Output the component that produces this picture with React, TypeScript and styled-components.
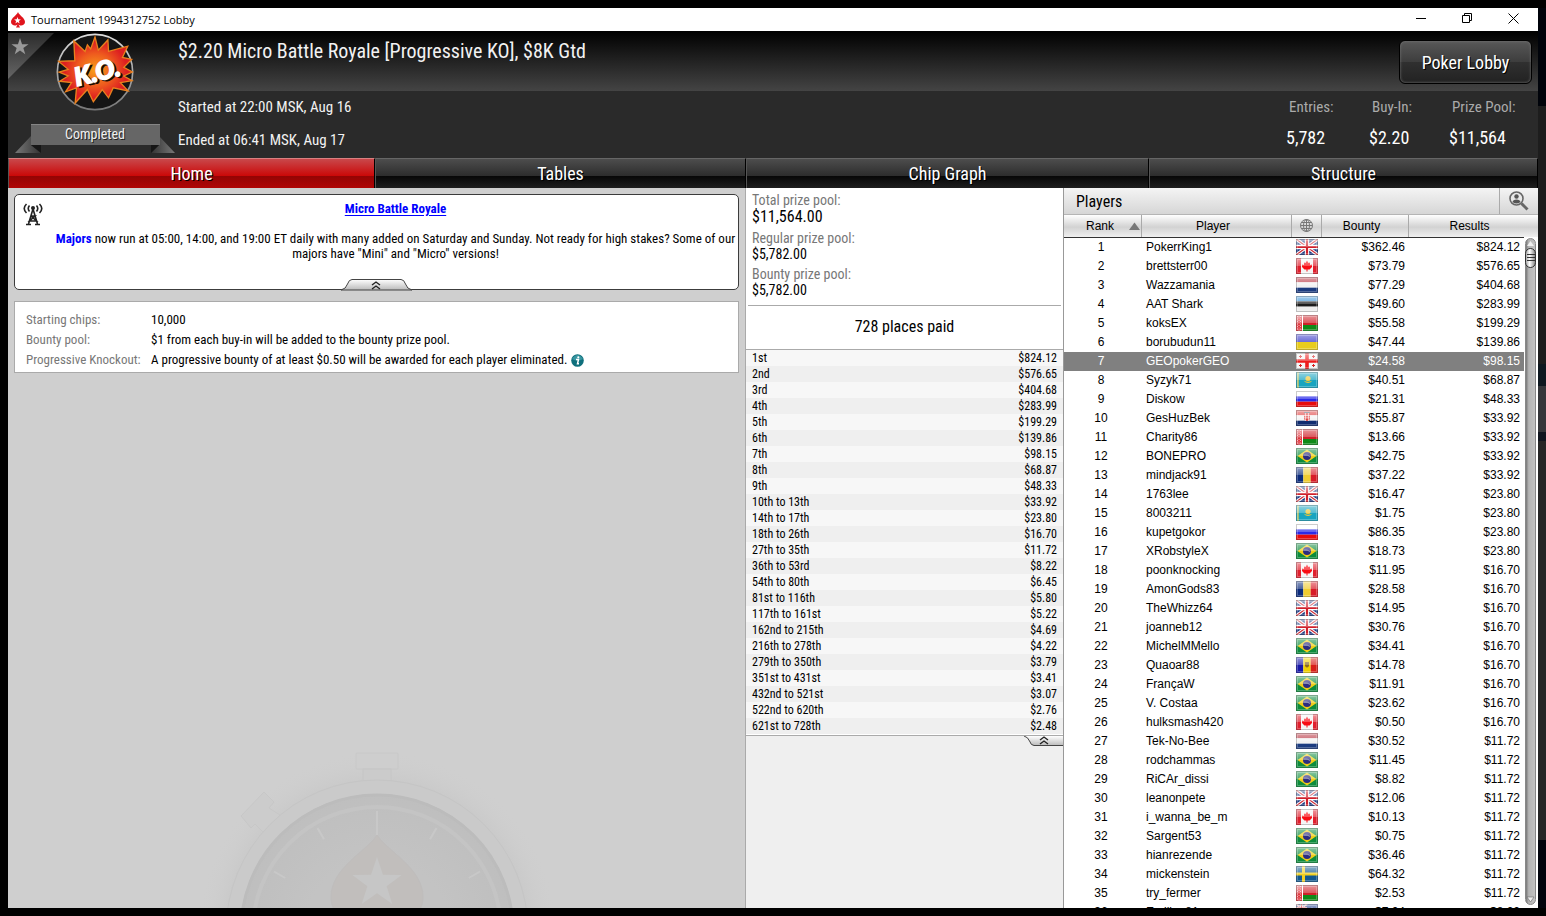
import React from "react";
import styled, { createGlobalStyle, css } from "styled-components";

const narrow = `"Liberation Sans Narrow", "Roboto Condensed", "Liberation Sans", sans-serif`;
const sans = `"Liberation Sans", Arial, sans-serif`;

const GlobalStyle = createGlobalStyle`
  * { box-sizing: border-box; }
  body { margin: 0; background: #000; font-family: ${narrow}; }
  button { font: inherit; margin: 0; padding: 0; border: 0; background: none; color: inherit; cursor: pointer; }
  h1, h2, p, dl, dd, dt { margin: 0; font-weight: normal; }
  table { border-collapse: collapse; width: 100%; }
  td, th { padding: 0; font-weight: normal; }
  svg { display: block; }
`;

const Desktop = styled.div`
  height: 100vh;
  padding: 8px;
  background:
    linear-gradient(#000, #000) bottom / 100% 8px no-repeat,
    linear-gradient(#000 8px, #00030a 8px 106px, #1d1d1d 106px 364px, #0e1820 364px 386px, #35363a 386px 432px, #10151f 432px 441px, #262626 441px 840px, #02040c 840px)
      right / 8px 100% no-repeat,
    #000;
`;

const Window = styled.div`
  display: flex;
  flex-direction: column;
  height: 100%;
  overflow: hidden;
  background: #cfcfcf;
`;

/* ---------- title bar ---------- */

const TitleBar = styled.header`
  display: flex;
  align-items: center;
  flex: none;
  height: 23px;
  padding: 0 2px;
  background: #fff;
  color: #000;
  font: 11px/22px "Open Sans", "Noto Sans", sans-serif;
`;

const TitleText = styled.span`
  flex: 1;
  padding-left: 5px;
`;

const WindowButton = styled.button`
  display: flex;
  align-items: center;
  justify-content: center;
  width: 46px;
  height: 23px;
  padding-bottom: 2px;
`;

/* ---------- tournament header ---------- */

const Hero = styled.section`
  position: relative;
  display: grid;
  grid-template-columns: 170px 1fr auto;
  flex: none;
  height: 127px;
  color: #f2f2f2;
  background: linear-gradient(#000, #444) top / 100% 60px no-repeat, #2a2a2a;
`;

const Favourite = styled.button`
  position: absolute;
  left: 0;
  top: 2px;
`;

const Emblem = styled.div`
  display: flex;
  flex-direction: column;
  align-items: center;
  gap: 13px;
  padding: 2px 0 0 4px;
`;

const Ribbon = styled.div`
  position: relative;
  width: 160px;
  height: 30px;
`;

const RibbonText = styled.span`
  position: absolute;
  inset: 0;
  text-align: center;
  font-size: 14px;
  line-height: 21px;
  color: #f0f0f0;
  text-shadow: 1px 1px 0 #222;
`;

const Facts = styled.div`
  display: flex;
  flex-direction: column;
`;

const EventName = styled.h1`
  height: 60px;
  font-size: 20px;
  line-height: 41px;
`;

const EventTime = styled.p`
  font-size: 15px;
  line-height: 33px;
`;

const Side = styled.div`
  display: flex;
  flex-direction: column;
  align-items: flex-end;
  padding: 9px 6px 0 0;
`;

const LobbyButton = styled.button`
  width: 133px;
  height: 44px;
  border: 1px solid #000;
  border-radius: 6px;
  background: linear-gradient(#585858, #3d3d3d 50%, #303030 50%, #222);
  box-shadow: inset 0 0 3px #777;
  color: #fff;
  font-size: 18px;
  text-shadow: 1px 1px 0 #000;
`;

const Stats = styled.dl`
  display: grid;
  grid-template-columns: 83px 80px 83px;
  padding-top: 7px;
`;

const StatLabel = styled.dt`
  padding-left: 3px;
  font-size: 15px;
  line-height: 32px;
  color: #aaa;
`;

const StatValue = styled.dd`
  font-size: 18px;
  line-height: 30px;
  color: #fff;
`;

/* ---------- tabs ---------- */

const Tabs = styled.nav`
  display: grid;
  grid-template-columns: 367fr 371fr 403fr 389fr;
  flex: none;
  height: 30px;
  background: #000;
`;

const Tab = styled.button<{ $active?: boolean }>`
  border-left: 1px solid #555;
  border-right: 1px solid #000;
  border-top: 1px solid ${(p) => (p.$active ? "#d98080" : "#666")};
  background: ${(p) =>
    p.$active
      ? "linear-gradient(#c9484b, #cb0606 60%, #940404 60%, #b00505)"
      : "linear-gradient(#4d4d4d, #2c2c2c 60%, #080808 60%, #1e1e1e)"};
  color: #fff;
  font-size: 18px;
  line-height: 28px;
  text-shadow: 1px 1px 0 #000;
`;

/* ---------- body ---------- */

const Columns = styled.main`
  display: grid;
  grid-template-columns: 1fr 318px 475px;
  flex: 1;
  min-height: 0;
`;

const HomePane = styled.section`
  position: relative;
  display: flex;
  flex-direction: column;
  gap: 11px;
  padding: 6px;
  overflow: hidden;
  background: #cfcfcf;
`;

const Stopwatch = styled.svg`
  position: absolute;
  left: 50%;
  bottom: 0;
  margin-left: -180px;
`;

const Notice = styled.article`
  position: relative;
  height: 96px;
  padding: 6px 0 0 38px;
  border: 1px solid #3c3c3c;
  border-radius: 5px;
  background: #fff;
  text-align: center;
  font-size: 13px;
  line-height: 15px;
  color: #000;
`;

const Antenna = styled.svg`
  position: absolute;
  left: 8px;
  top: 7px;
`;

const NoticeText = styled.p`
  padding-top: 15px;
`;

const NoticeLink = styled.a<{ $plain?: boolean }>`
  color: #00f;
  font-weight: bold;
  text-decoration: ${(p) => (p.$plain ? "none" : "underline")};
  text-underline-offset: 2px;
`;

const NoticeFold = styled.button`
  position: absolute;
  left: 50%;
  bottom: -2px;
  margin-left: -36px;
`;

const Rules = styled.dl`
  position: relative;
  display: grid;
  grid-template-columns: 125px 1fr;
  padding: 8px 11px 2px;
  border: 1px solid #aaa;
  background: #fff;
  font-size: 13px;
  line-height: 20px;
`;

const RuleLabel = styled.dt`
  color: #777;
`;

const RuleValue = styled.dd`
  display: flex;
  gap: 4px;
  align-items: center;
  color: #000;
`;

const PrizePane = styled.section`
  border-left: 1px solid #aaa;
  background: #efefef;
  overflow: hidden;
`;

const PrizeSheet = styled.div`
  border-bottom: 1px solid #aaa;
  padding-bottom: 1px;
  background: #fff;
`;

const Pools = styled.dl`
  height: 118px;
  margin: 0 2px;
  padding: 3px 4px 0;
  border-bottom: 1px solid #aaa;
`;

const PoolLabel = styled.dt`
  font-size: 14px;
  line-height: 18px;
  color: #777;
`;

const PoolValue = styled.dd<{ $big?: boolean }>`
  padding-bottom: ${(p) => (p.$big ? "4px" : "3px")};
  font-size: ${(p) => (p.$big ? "16px" : "14px")};
  line-height: ${(p) => (p.$big ? "16px" : "15px")};
  color: #000;
`;

const PlacesPaid = styled.h2`
  height: 44px;
  border-bottom: 1px solid #aaa;
  text-align: center;
  font-size: 16px;
  line-height: 42px;
`;

const PrizeTable = styled.table`
  font-size: 12px;
  tr { height: 16px; }
  tr:nth-child(odd) { background: #f7f7f7; }
  tr:nth-child(even) { background: #efefef; }
  th { padding-left: 6px; line-height: 16px; text-align: left; }
  td { padding-right: 6px; line-height: 16px; text-align: right; }
`;

const PrizeFold = styled.button`
  display: block;
  margin-left: auto;
`;

/* ---------- players ---------- */

const PlayersPane = styled.section`
  position: relative;
  overflow: hidden;
  border-left: 1px solid #999;
  background: #fff;
`;

const PlayersBar = styled.header`
  display: flex;
  justify-content: space-between;
  height: 27px;
  border-bottom: 1px solid #b5b5b5;
  background: linear-gradient(#f4f4f4, #d6d6d6);
`;

const PlayersTitle = styled.h2`
  padding-left: 12px;
  font-size: 16px;
  line-height: 27px;
`;

const SearchButton = styled.button`
  display: flex;
  align-items: center;
  justify-content: center;
  width: 39px;
  border-left: 1px solid #aaa;
`;

const PlayersTable = styled.table`
  table-layout: fixed;
  font-family: ${sans};
  font-size: 12px;
  color: #000;
`;

const HeadCell = styled.th<{ $width?: number }>`
  ${(p) => p.$width && css`width: ${p.$width}px;`}
  height: 22px;
  padding-right: 8px;
  border-bottom: 1px solid #333;
  background: linear-gradient(#fff, #d2d2d2 55%, #f0f0f0);
  box-shadow: inset -1px 0 #aaa;
  text-align: center;
  &:last-child { box-shadow: none; }
`;

const RankHead = styled.span`
  display: flex;
  align-items: center;
  justify-content: flex-end;
  gap: 15px;
`;

const SortArrow = styled.svg`
  margin-right: -6px;
`;

const IconHead = styled.span`
  display: flex;
  justify-content: center;
  padding-left: 7px;
`;

const PlayerRow = styled.tr<{ $selected: boolean }>`
  height: 19px;
  ${(p) => p.$selected && css`
    background: #808080;
    color: #fff;
  `}
`;

const Cell = styled.td<{ $align?: "left" | "center" | "right"; $end?: number }>`
  line-height: 19px;
  text-align: ${(p) => p.$align ?? "left"};
  padding-left: 4px;
  padding-right: ${(p) => p.$end ?? 0}px;
  white-space: nowrap;
`;

const ScrollBar = styled.div`
  position: absolute;
  right: 0;
  top: 49px;
  bottom: 0;
  width: 14px;
  padding: 1px 2px 3px 1px;
  background: #fff;
`;

const ScrollTrack = styled.div`
  position: relative;
  display: flex;
  flex-direction: column;
  justify-content: space-between;
  height: 100%;
  border: 1px solid #888;
  border-radius: 6px;
  background: linear-gradient(90deg, #777, #b4b4b4 30%, #c2c2c2);
`;

const ScrollThumb = styled.div`
  position: absolute;
  left: -1px;
  right: -1px;
  top: 9px;
  height: 20px;
  padding: 5px 1px 0;
  border: 1px solid #333;
  border-radius: 6px;
  background: linear-gradient(90deg, #aaa, #fff 40%, #888);
`;

/* ---------- flags ---------- */

const star = (cx: number, cy: number, r: number) =>
  Array.from({ length: 10 }, (_, i) => {
    const a = (Math.PI * i) / 5 - Math.PI / 2;
    const d = i % 2 ? r * 0.39 : r;
    return `${(cx + d * Math.cos(a)).toFixed(2)},${(cy + d * Math.sin(a)).toFixed(2)}`;
  }).join(" ");

const Bands = ({ colors, vertical }: { colors: string[]; vertical?: boolean }) => (
  <>
    {colors.map((c, i) =>
      vertical ? (
        <rect key={i} x={(22 / colors.length) * i} width={22 / colors.length} height="16" fill={c} />
      ) : (
        <rect key={i} y={(16 / colors.length) * i} width="22" height={16 / colors.length} fill={c} />
      )
    )}
  </>
);

const UnionJack = () => (
  <>
    <rect width="22" height="16" fill="#1d3a82" />
    <path d="M0 0L22 16M22 0L0 16" stroke="#fff" strokeWidth="3.4" />
    <path d="M0 0L22 16M22 0L0 16" stroke="#cc2a35" strokeWidth="1.2" />
    <path d="M11 0V16M0 8H22" stroke="#fff" strokeWidth="4.4" />
    <path d="M11 0V16M0 8H22" stroke="#d0202c" strokeWidth="2.2" />
  </>
);

const flagArt: Record<string, React.ReactNode> = {
  gb: <UnionJack />,
  ca: (
    <>
      <rect width="22" height="16" fill="#f4f4f4" />
      <path d="M0 0H5V16H0zM17 0H22V16H17z" fill="#e0202e" />
      <path d="M11 2.5L12.5 5L14 4.500V7L16 6.500V9L13.500 11.500H11.500V13.500H10.500V11.500H8.500L6 9V6.500L8 7V4.500L9.500 5Z" fill="#f80c14" />
    </>
  ),
  nl: <Bands colors={["#b8323f", "#f2f2f2", "#1c3c80"]} />,
  ee: <Bands colors={["#3c94d8", "#1c1c1c", "#ededed"]} />,
  by: (
    <>
      <rect width="22" height="11" fill="#cf2028" />
      <rect y="10" width="22" height="6" fill="#0f8a18" />
      <rect width="6" height="16" fill="#e03840" />
      <path d="M1.500 1V16M4.500 1V16M3 0V16" stroke="#fff" strokeWidth=".6" strokeDasharray="1 1.500" />
      <path d="M6.500 0V16" stroke="#fff" />
    </>
  ),
  ua: <Bands colors={["#3a3ac8", "#e8cc1c"]} />,
  ge: (
    <>
      <rect width="22" height="16" fill="#f4f4f4" />
      <path d="M11 0V16M0 8H22" stroke="#ee1c1c" strokeWidth="3.600" />
      <path d="M4.500 2v3M3 3.500h3M17.500 2v3M16 3.500h3M4.500 11v3M3 12.500h3M17.500 11v3M16 12.500h3" stroke="#d82020" />
    </>
  ),
  kz: (
    <>
      <rect width="22" height="16" fill="#18a4c0" />
      <path d="M2 0V16" stroke="#d8c850" strokeWidth="1.400" />
      <circle cx="12" cy="6.500" r="2.600" fill="#f0c838" />
      <path d="M7.500 8.500Q12 13.500 16.500 8.500Q12 11 7.500 8.500" fill="#f0c838" />
    </>
  ),
  ru: <Bands colors={["#fff", "#2a2ae8", "#e80c0c"]} />,
  hr: (
    <>
      <Bands colors={["#e04040", "#f4f4f4", "#102c70"]} />
      <path d="M8 3h6v6q-3 4-6 0z" fill="#e04848" />
      <path d="M9.500 3v8M12.500 3v8M8 5.500h6M8 8h6" stroke="#fff" strokeWidth=".6" />
      <path d="M8 2.500h6" stroke="#567" />
    </>
  ),
  br: (
    <>
      <rect width="22" height="16" fill="#0c8c3c" />
      <path d="M11 1.500L20.500 8 11 14.500 1.500 8z" fill="#f0cc18" />
      <circle cx="11" cy="8" r="4" fill="#2c2c80" />
      <path d="M7.500 7q4-.8 7 2" stroke="#99a" fill="none" strokeWidth=".8" />
    </>
  ),
  ro: <Bands vertical colors={["#0c2c7c", "#f0cc30", "#d81c28"]} />,
  md: (
    <>
      <Bands vertical colors={["#1818a8", "#f0d000", "#d82018"]} />
      <path d="M9 5h4v4q-2 3-4 0z" fill="#8a6a20" />
    </>
  ),
  se: (
    <>
      <rect width="22" height="16" fill="#105890" />
      <path d="M7.500 0V16M0 8H22" stroke="#f0d020" strokeWidth="3" />
    </>
  ),
  au: (
    <>
      <rect width="22" height="16" fill="#1c3a90" />
      <g transform="scale(.5)">
        <UnionJack />
      </g>
      <polygon points={star(16, 5, 2)} fill="#fff" />
    </>
  ),
};

const FlagSvg = styled.svg`
  display: block;
  margin-bottom: 1px;
`;

const Flag = ({ code }: { code: string }) => (
  <FlagSvg width="22" height="16" viewBox="0 0 22 16" role="img" aria-label={code}>
    {flagArt[code]}
    <rect width="22" height="8" fill="url(#gloss)" />
    <rect x="1.5" y="1.5" width="19" height="13" fill="none" stroke="#fff" strokeOpacity=".25" />
    <rect x=".5" y=".5" width="21" height="15" fill="none" stroke="#555" strokeOpacity=".3" />
  </FlagSvg>
);

/* ---------- drawings ---------- */

const SharedGradients = styled.svg`
  position: absolute;
`;

const Chevrons = ({ x, y }: { x: number; y: number }) => (
  <path d={`M${x - 4} ${y + 3}L${x} ${y}L${x + 4} ${y + 3}M${x - 4} ${y + 7}L${x} ${y + 4}L${x + 4} ${y + 7}`} fill="none" stroke="#222" strokeWidth="1.4" />
);

const KoBadge = () => (
  <svg width="78" height="78" viewBox="145 72 236 236" role="img" aria-label="Knockout">
    <defs>
      <radialGradient id="burst">
        <stop offset="0" stopColor="#f9a01b" />
        <stop offset=".5" stopColor="#ee5a1e" />
        <stop offset=".85" stopColor="#dd1f21" />
      </radialGradient>
      <linearGradient id="rim" x2="0" y2="1">
        <stop offset="0" stopColor="#ddd" />
        <stop offset="1" stopColor="#777" />
      </linearGradient>
    </defs>
    <circle cx="263" cy="190" r="114" fill="#151515" stroke="url(#rim)" strokeWidth="5" />
    <path
      d="M263 84L273 124L302 93L304 128L362 112L346 146L374 152L350 176L376 190L350 202L375 216L340 222L363 247L318 238L304 268L285 243L258 280L240 243L203 284L207 238L174 250L192 222L156 218L182 202L154 190L182 182L153 158L202 156L199 96L233 128L240 108L250 120Z"
      fill="url(#burst)"
      stroke="#e8801e"
      strokeWidth="4"
    />
    <g transform="rotate(-14 270 190)" fontFamily="Lato, sans-serif" fontWeight="900" fontStyle="italic" fontSize="76" textAnchor="middle">
      <text x="274" y="222" fill="#1a0a00" stroke="#1a0a00" strokeWidth="5">K.O.</text>
      <text x="269" y="217" fill="#fff" stroke="#fff" strokeWidth="5">K.O.</text>
    </g>
  </svg>
);

const RibbonArt = () => (
  <svg width="160" height="30" viewBox="0 0 160 30" aria-hidden="true">
    <defs>
      <linearGradient id="tailL">
        <stop offset="0" stopColor="#777" />
        <stop offset="1" stopColor="#333" />
      </linearGradient>
      <linearGradient id="tailR">
        <stop offset="0" stopColor="#333" />
        <stop offset="1" stopColor="#777" />
      </linearGradient>
    </defs>
    <path d="M0 29L16 12V21L26 29Z" fill="url(#tailL)" />
    <path d="M160 29L144 12V21L136 29Z" fill="url(#tailR)" />
    <path d="M16 21H26V29ZM144 21H136V29Z" fill="#161616" />
    <rect x="16" width="129" height="21" fill="#666" />
    <path d="M16 .5H145" stroke="#858585" />
  </svg>
);

const StopwatchArt = () => (
  <Stopwatch width="360" height="180" viewBox="196 728 360 180" aria-hidden="true">
    <defs>
      <radialGradient id="halo">
        <stop offset=".78" stopColor="#b8b8b8" />
        <stop offset="1" stopColor="#cfcfcf" stopOpacity="0" />
      </radialGradient>
      <radialGradient id="dial">
        <stop offset=".5" stopColor="#c3c3c3" />
        <stop offset="1" stopColor="#bebebe" />
      </radialGradient>
    </defs>
    <circle cx="376" cy="931" r="180" fill="url(#halo)" opacity=".4" />
    <rect x="355" y="753" width="42" height="16" rx="1" fill="#cecece" stroke="#c8c8c8" />
    <rect x="362" y="769" width="28" height="12" fill="#cbcbcb" stroke="#c6c6c6" />
    <path d="M240 816L263 792L273 802L268 808L279 815L262 832L254 824L250 828Z" fill="#cccccc" stroke="#c7c7c7" />
    <circle cx="376" cy="931" r="144" fill="url(#dial)" stroke="#cacaca" strokeWidth="14" />
    <circle cx="376" cy="931" r="151" fill="none" stroke="#c5c5c5" />
    <circle cx="376" cy="931" r="136" fill="none" stroke="#bcbcbc" strokeWidth="3" />
    <circle cx="376" cy="931" r="124" fill="none" stroke="#c4c4c4" strokeWidth="4" />
    <path d="M376 835C366 851 330 868 330 897C330 912 340 918 352 918H400C412 918 422 912 422 897C422 868 386 851 376 835Z" fill="#c1bebc" stroke="#bfbdbc" />
    <polygon points={star(376, 883, 26)} fill="#c6c6c6" />
    <path d="M376 811V835" stroke="#c8c8c8" strokeWidth="2" />
    {[-60, -30, 30, 60].map((a) => (
      <path key={a} d="M376 812V825" stroke="#c8c8c8" strokeWidth="2" transform={`rotate(${a} 376 931)`} />
    ))}
  </Stopwatch>
);

/* ---------- data ---------- */

const prizes: [string, string][] = [
  ["1st", "$824.12"], ["2nd", "$576.65"], ["3rd", "$404.68"], ["4th", "$283.99"],
  ["5th", "$199.29"], ["6th", "$139.86"], ["7th", "$98.15"], ["8th", "$68.87"],
  ["9th", "$48.33"], ["10th to 13th", "$33.92"], ["14th to 17th", "$23.80"], ["18th to 26th", "$16.70"],
  ["27th to 35th", "$11.72"], ["36th to 53rd", "$8.22"], ["54th to 80th", "$6.45"], ["81st to 116th", "$5.80"],
  ["117th to 161st", "$5.22"], ["162nd to 215th", "$4.69"], ["216th to 278th", "$4.22"], ["279th to 350th", "$3.79"],
  ["351st to 431st", "$3.41"], ["432nd to 521st", "$3.07"], ["522nd to 620th", "$2.76"], ["621st to 728th", "$2.48"],
];

const players: [string, string, string, string][] = [
  ["PokerrKing1", "gb", "$362.46", "$824.12"],
  ["brettsterr00", "ca", "$73.79", "$576.65"],
  ["Wazzamania", "nl", "$77.29", "$404.68"],
  ["AAT Shark", "ee", "$49.60", "$283.99"],
  ["koksEX", "by", "$55.58", "$199.29"],
  ["borubudun11", "ua", "$47.44", "$139.86"],
  ["GEOpokerGEO", "ge", "$24.58", "$98.15"],
  ["Syzyk71", "kz", "$40.51", "$68.87"],
  ["Diskow", "ru", "$21.31", "$48.33"],
  ["GesHuzBek", "hr", "$55.87", "$33.92"],
  ["Charity86", "by", "$13.66", "$33.92"],
  ["BONEPRO", "br", "$42.75", "$33.92"],
  ["mindjack91", "ro", "$37.22", "$33.92"],
  ["1763lee", "gb", "$16.47", "$23.80"],
  ["8003211", "kz", "$1.75", "$23.80"],
  ["kupetgokor", "ru", "$86.35", "$23.80"],
  ["XRobstyleX", "br", "$18.73", "$23.80"],
  ["poonknocking", "ca", "$11.95", "$16.70"],
  ["AmonGods83", "ro", "$28.58", "$16.70"],
  ["TheWhizz64", "gb", "$14.95", "$16.70"],
  ["joanneb12", "gb", "$30.76", "$16.70"],
  ["MichelMMello", "br", "$34.41", "$16.70"],
  ["Quaoar88", "md", "$14.78", "$16.70"],
  ["FrançaW", "br", "$11.91", "$16.70"],
  ["V. Costaa", "br", "$23.62", "$16.70"],
  ["hulksmash420", "ca", "$0.50", "$16.70"],
  ["Tek-No-Bee", "nl", "$30.52", "$11.72"],
  ["rodchammas", "br", "$11.45", "$11.72"],
  ["RiCAr_dissi", "br", "$8.82", "$11.72"],
  ["leanonpete", "gb", "$12.06", "$11.72"],
  ["i_wanna_be_m", "ca", "$10.13", "$11.72"],
  ["Sargent53", "br", "$0.75", "$11.72"],
  ["hianrezende", "br", "$36.46", "$11.72"],
  ["mickenstein", "se", "$64.32", "$11.72"],
  ["try_fermer", "by", "$2.53", "$11.72"],
  ["Emilion81", "au", "$7.04", "$8.22"],
];

export default function App() {
  return (
    <Desktop>
      <GlobalStyle />
      <SharedGradients width="0" height="0" aria-hidden="true">
        <defs>
          <linearGradient id="gloss" x2="0" y2="1">
            <stop offset="0" stopColor="#fff" stopOpacity=".55" />
            <stop offset="1" stopColor="#fff" stopOpacity=".25" />
          </linearGradient>
          <linearGradient id="fold" x2="0" y2="1">
            <stop offset="0" stopColor="#fff" />
            <stop offset="1" stopColor="#bbb" />
          </linearGradient>
        </defs>
      </SharedGradients>
      <Window>
        <TitleBar>
          <svg width="16" height="16" viewBox="0 0 16 16" aria-hidden="true">
            <path d="M8 0C7 3 1 6 1 10C1 12 3 13.500 5 13.500C6 13.500 7 13 7.500 12.500L6 15.500H10L8.500 12.500C9 13 10 13.500 11 13.500C13 13.500 15 12 15 10C15 6 9 3 8 0Z" fill="#e0141c" />
            <polygon points={star(7.500, 8.500, 3.600)} fill="#fff" />
          </svg>
          <TitleText>Tournament 1994312752 Lobby</TitleText>
          <WindowButton aria-label="Minimize">
            <svg width="11" height="11"><path d="M0 5.500H10" stroke="#000" /></svg>
          </WindowButton>
          <WindowButton aria-label="Restore">
            <svg width="11" height="11"><path d="M.5 2.500H7.500V9.500H.5ZM2.500 2.500V.5H9.500V7.500H7.500" fill="none" stroke="#000" /></svg>
          </WindowButton>
          <WindowButton aria-label="Close">
            <svg width="11" height="11"><path d="M.5 .5L10.500 10.500M10.500 .5L.5 10.500" stroke="#000" /></svg>
          </WindowButton>
        </TitleBar>

        <Hero>
          <Favourite aria-label="Favourite">
            <svg width="46" height="46">
              <defs>
                <linearGradient id="corner" x2="0" y2="1">
                  <stop offset="0" stopColor="#2c2c2c" />
                  <stop offset="1" stopColor="#666" />
                </linearGradient>
              </defs>
              <path d="M0 0H46L0 46Z" fill="url(#corner)" />
              <polygon points={star(12, 14, 9)} fill="#999" />
            </svg>
          </Favourite>
          <Emblem>
            <KoBadge />
            <Ribbon>
              <RibbonArt />
              <RibbonText>Completed</RibbonText>
            </Ribbon>
          </Emblem>
          <Facts>
            <EventName>$2.20 Micro Battle Royale [Progressive KO], $8K Gtd</EventName>
            <EventTime>Started at 22:00 MSK, Aug 16</EventTime>
            <EventTime>Ended at 06:41 MSK, Aug 17</EventTime>
          </Facts>
          <Side>
            <LobbyButton>Poker Lobby</LobbyButton>
            <Stats>
              <div><StatLabel>Entries:</StatLabel><StatValue>5,782</StatValue></div>
              <div><StatLabel>Buy-In:</StatLabel><StatValue>$2.20</StatValue></div>
              <div><StatLabel>Prize Pool:</StatLabel><StatValue>$11,564</StatValue></div>
            </Stats>
          </Side>
        </Hero>

        <Tabs>
          <Tab $active>Home</Tab>
          <Tab>Tables</Tab>
          <Tab>Chip Graph</Tab>
          <Tab>Structure</Tab>
        </Tabs>

        <Columns>
          <HomePane>
            <StopwatchArt />
            <Notice>
              <Antenna width="20" height="24" viewBox="0 0 20 24" aria-hidden="true">
                <g fill="none" stroke="#222" strokeWidth="1.600">
                  <path d="M3.500 2Q-1 6.500 3.500 11M6.500 3.500Q4 6.500 6.500 9.500M16.500 2Q21 6.500 16.500 11M13.500 3.500Q16 6.500 13.500 9.500" />
                  <path d="M10 7L5.500 22M10 7L14.500 22M8 14H12L6.500 19H13.500L8 14" />
                  <path d="M3 22.500H8M12 22.500H17" />
                </g>
                <circle cx="10" cy="6" r="2" fill="#222" />
              </Antenna>
              <NoticeLink href="#royale">Micro Battle Royale</NoticeLink>
              <NoticeText>
                <NoticeLink href="#majors" $plain>Majors</NoticeLink> now run at 05:00, 14:00, and 19:00 ET daily with many added on Saturday and Sunday. Not ready for high stakes? Some of our majors have "Mini" and "Micro" versions!
              </NoticeText>
              <NoticeFold aria-label="Collapse notice">
                <svg width="71" height="12">
                  <path d="M0 11Q5 10 6.500 5Q8 .5 11 .5H60Q63 .5 64.500 5Q66 10 71 11Z" fill="url(#fold)" stroke="#444" />
                  <Chevrons x={35} y={3} />
                </svg>
              </NoticeFold>
            </Notice>
            <Rules>
              <RuleLabel>Starting chips:</RuleLabel>
              <RuleValue>10,000</RuleValue>
              <RuleLabel>Bounty pool:</RuleLabel>
              <RuleValue>$1 from each buy-in will be added to the bounty prize pool.</RuleValue>
              <RuleLabel>Progressive Knockout:</RuleLabel>
              <RuleValue>
                A progressive bounty of at least $0.50 will be awarded for each player eliminated.
                <svg width="13" height="13" viewBox="0 0 13 13" role="img" aria-label="Info">
                  <circle cx="6.500" cy="6.500" r="6.300" fill="#0f6f7c" />
                  <path d="M1 5Q6.500 -3 12 5Q6.500 8 1 5" fill="#4aa6b0" opacity=".7" />
                  <circle cx="7.300" cy="3.300" r="1.100" fill="#fff" />
                  <path d="M5 5.500H7.500L6.500 9.800H8" fill="none" stroke="#fff" strokeWidth="1.500" />
                </svg>
              </RuleValue>
            </Rules>
          </HomePane>

          <PrizePane>
            <PrizeSheet>
              <Pools>
                <PoolLabel>Total prize pool:</PoolLabel>
                <PoolValue $big>$11,564.00</PoolValue>
                <PoolLabel>Regular prize pool:</PoolLabel>
                <PoolValue>$5,782.00</PoolValue>
                <PoolLabel>Bounty prize pool:</PoolLabel>
                <PoolValue>$5,782.00</PoolValue>
              </Pools>
              <PlacesPaid>728 places paid</PlacesPaid>
              <PrizeTable>
                <tbody>
                  {prizes.map(([place, amount]) => (
                    <tr key={place}>
                      <th scope="row">{place}</th>
                      <td>{amount}</td>
                    </tr>
                  ))}
                </tbody>
              </PrizeTable>
            </PrizeSheet>
            <PrizeFold aria-label="Collapse prizes">
              <svg width="39" height="11">
                <path d="M0 0Q4 1 5.500 5Q7 9.500 10 9.500H39V0Z" fill="url(#fold)" />
                <path d="M0 0Q4 1 5.500 5Q7 9.500 10 9.500H39" fill="none" stroke="#444" />
                <Chevrons x={20} y={1} />
              </svg>
            </PrizeFold>
          </PrizePane>

          <PlayersPane>
            <PlayersBar>
              <PlayersTitle>Players</PlayersTitle>
              <SearchButton aria-label="Find player">
                <svg width="20" height="20" viewBox="0 0 20 20">
                  <circle cx="7.500" cy="7.500" r="6.500" fill="#e8e8e8" stroke="#666" strokeWidth="1.600" />
                  <circle cx="7.500" cy="5.500" r="2.200" fill="#555" />
                  <path d="M3.500 11Q4 8.500 7.500 8.500Q11 8.500 11.500 11Q7.500 14 3.500 11" fill="#555" />
                  <path d="M12.500 12.500L18.500 18.500" stroke="#666" strokeWidth="3" />
                </svg>
              </SearchButton>
            </PlayersBar>
            <PlayersTable>
              <thead>
                <tr>
                  <HeadCell $width={78} scope="col" aria-sort="ascending">
                    <RankHead>
                      Rank
                      <SortArrow width="11" height="8" viewBox="0 0 11 8">
                        <path d="M5.500 .5L11 8H0Z" fill="#777" />
                      </SortArrow>
                    </RankHead>
                  </HeadCell>
                  <HeadCell $width={150} scope="col">Player</HeadCell>
                  <HeadCell $width={30} scope="col" aria-label="Country">
                    <IconHead>
                      <svg width="13" height="13" viewBox="0 0 13 13" fill="none" stroke="#777">
                        <circle cx="6.500" cy="6.500" r="6" />
                        <ellipse cx="6.500" cy="6.500" rx="3" ry="6" />
                        <path d="M6.500 .5V12.500M.5 6.500H12.500M1.500 3.500H11.500M1.500 9.500H11.500" />
                      </svg>
                    </IconHead>
                  </HeadCell>
                  <HeadCell $width={87} scope="col">Bounty</HeadCell>
                  <HeadCell scope="col">Results</HeadCell>
                </tr>
              </thead>
              <tbody>
                {players.map(([name, country, bounty, result], i) => (
                  <PlayerRow key={name} $selected={i === 6}>
                    <Cell $align="center" $end={8}>{i + 1}</Cell>
                    <Cell>{name}</Cell>
                    <Cell><Flag code={country} /></Cell>
                    <Cell $align="right" $end={4}>{bounty}</Cell>
                    <Cell $align="right" $end={18}>{result}</Cell>
                  </PlayerRow>
                ))}
              </tbody>
            </PlayersTable>
            <ScrollBar>
              <ScrollTrack>
                <svg width="9" height="10"><path d="M4.500 2L8 7H1Z" fill="#eee" /></svg>
                <ScrollThumb>
                  <svg width="9" height="8"><path d="M0 .5H9M0 3.500H9M0 6.500H9" stroke="#333" /></svg>
                </ScrollThumb>
                <svg width="9" height="9"><path d="M1 2H8L4.500 7Z" fill="#eee" stroke="#666" strokeWidth=".6" /></svg>
              </ScrollTrack>
            </ScrollBar>
          </PlayersPane>
        </Columns>
      </Window>
    </Desktop>
  );
}
